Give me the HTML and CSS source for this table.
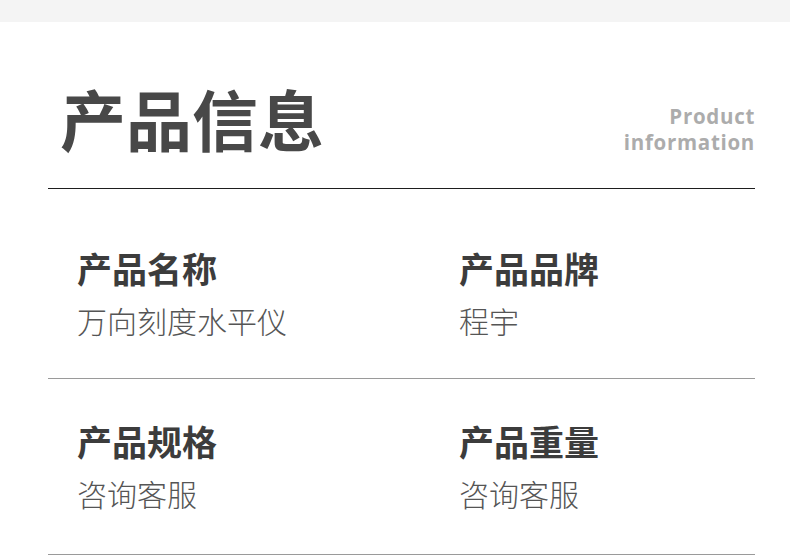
FILE: index.html
```html
<!DOCTYPE html>
<html lang="zh-CN">
<head>
<meta charset="utf-8">
<title>产品信息</title>
<link rel="stylesheet" href="styles.css">
</head>
<body>
<div class="topbar"></div>
<main class="sheet">
  <header class="head">
    <h1 class="title">产品信息</h1>
    <div class="en">
      <div class="en-line">Product</div>
      <div class="en-line">information</div>
    </div>
  </header>
  <section class="row row-first">
    <div class="cell">
      <div class="label">产品名称</div>
      <div class="value">万向刻度水平仪</div>
    </div>
    <div class="cell">
      <div class="label">产品品牌</div>
      <div class="value">程宇</div>
    </div>
  </section>
  <section class="row row-second">
    <div class="cell">
      <div class="label">产品规格</div>
      <div class="value">咨询客服</div>
    </div>
    <div class="cell">
      <div class="label">产品重量</div>
      <div class="value">咨询客服</div>
    </div>
  </section>
</main>
</body>
</html>
```
FILE: styles.css
```css
html, body {
  margin: 0;
  padding: 0;
  background: #ffffff;
}
body {
  font-family: "Noto Sans CJK SC", "Noto Sans", sans-serif;
  color: #444;
}
.topbar {
  height: 22px;
  background: #f4f4f4;
}
.sheet {
  margin: 0 35px 0 48px;
}
.head {
  box-sizing: border-box;
  height: 167px;
  border-bottom: 1px solid #1e1e1e;
  display: flex;
  justify-content: space-between;
  align-items: flex-start;
  padding: 62px 0 0 12px;
}
.title {
  margin: 0;
  font-size: 66px;
  line-height: 1;
  font-weight: 700;
  color: #484848;
  letter-spacing: 0;
}
.en {
  margin-top: 19px;
  font-family: "Open Sans", sans-serif;
  font-weight: 700;
  font-size: 20.5px;
  line-height: 26px;
  color: #acacac;
  text-align: right;
  letter-spacing: 0.7px;
}
.row {
  display: grid;
  grid-template-columns: 382px 1fr;
  border-bottom: 1px solid #9a9a9a;
  box-sizing: border-box;
}
.row-first {
  height: 190px;
  padding-top: 61px;
}
.row-second {
  height: 176px;
  padding-top: 44px;
}
.cell {
  padding-left: 29px;
}
.label {
  font-size: 35px;
  line-height: 1;
  font-weight: 700;
  color: #3c3c3c;
}
.value {
  margin-top: 20px;
  font-size: 30px;
  line-height: 1;
  font-weight: 300;
  color: #555;
}
```
